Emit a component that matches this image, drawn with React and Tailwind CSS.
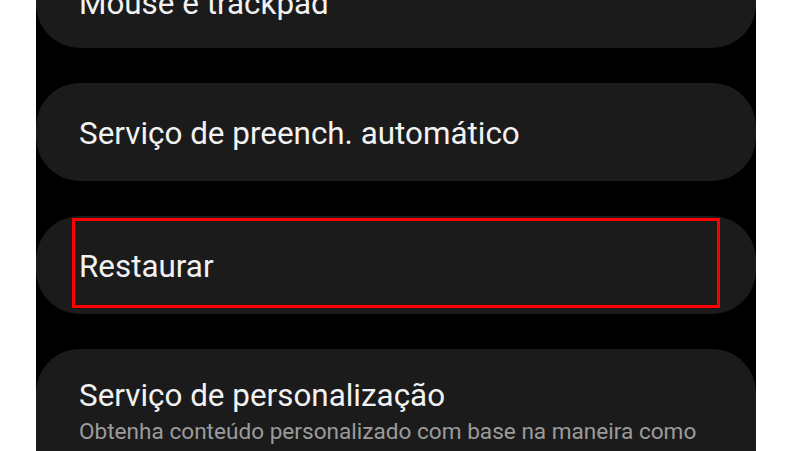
export default function App() {
  const font = { fontFamily: "Roboto, 'Noto Sans', sans-serif" };
  return (
    <div className="w-[800px] h-[451px] overflow-hidden bg-white" style={font}>
      <div className="ml-[36px] w-[720px] h-full bg-black overflow-hidden">
        <div className="flex flex-col gap-[35px] -mt-[50px]">
          <div className="h-[98px] rounded-[44px] bg-[#1b1b1b] px-[43px] flex items-center">
            <span className="text-[31.4px] leading-[38px] text-[#f2f2f2] pt-[9px]">Mouse e trackpad</span>
          </div>
          <div className="h-[98px] rounded-[44px] bg-[#1b1b1b] px-[43px] flex items-center">
            <span className="text-[31.4px] leading-[38px] text-[#f2f2f2] pt-[3px]">Serviço de preench. automático</span>
          </div>
          <div className="relative h-[98px] rounded-[44px] bg-[#1b1b1b] px-[43px] flex items-center">
            <span className="text-[31.4px] leading-[38px] text-[#f2f2f2] pt-[3px]">Restaurar</span>
            <div className="absolute left-[36px] top-[2px] w-[648px] h-[90px] border-[3px] border-[#ff0000]" />
          </div>
          <div className="rounded-[44px] bg-[#1b1b1b] px-[43px] pt-[28px] pb-[30px]">
            <div className="text-[31.4px] leading-[38px] text-[#f2f2f2]">Serviço de personalização</div>
            <div className="text-[22.6px] leading-[34px] text-[#9b9b9b]">
              Obtenha conteúdo personalizado com base na maneira como você usa o seu telefone.
            </div>
          </div>
        </div>
      </div>
    </div>
  );
}
